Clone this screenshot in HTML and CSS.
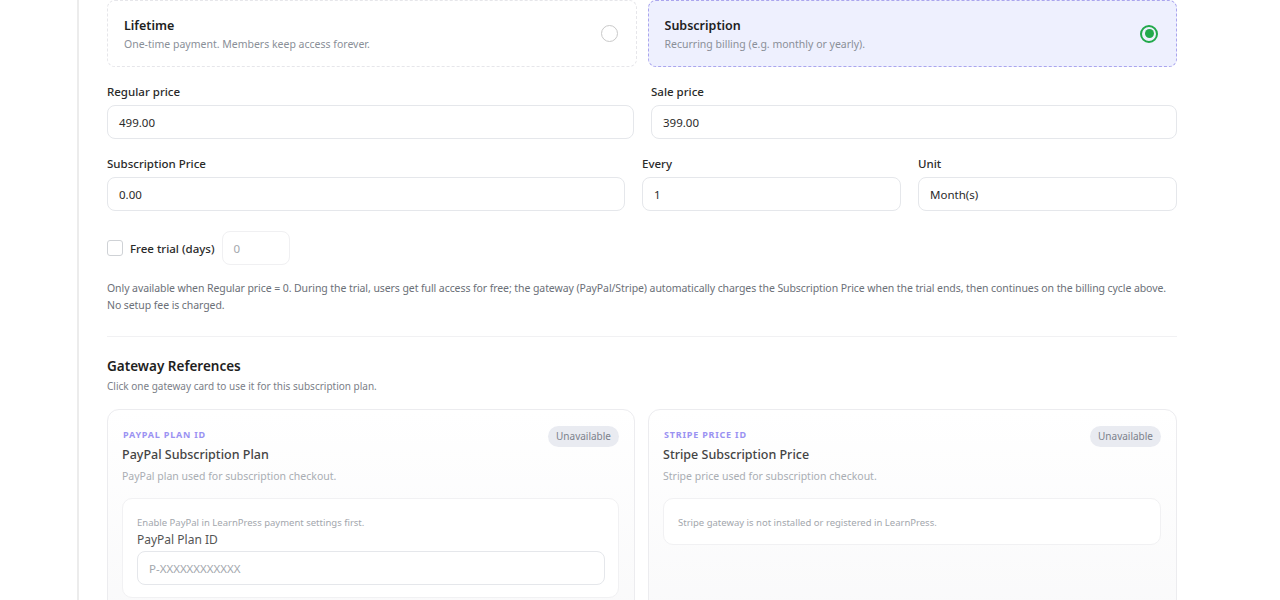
FILE: index.html
```html
<!DOCTYPE html>
<html lang="en">
<head>
    <meta charset="UTF-8">
    <meta name="viewport" content="width=device-width, initial-scale=1.0">
    <title>Subscription Plan</title>
    <link rel="stylesheet" href="styles.css">
</head>
<body>
    <div class="layout">
        <aside class="sidebar"></aside>
        <main class="content">
            <div class="plan-types">
                <label class="plan-card">
                    <div class="plan-text">
                        <div class="plan-title">Lifetime</div>
                        <div class="plan-desc">One-time payment. Members keep access forever.</div>
                    </div>
                    <span class="radio"></span>
                </label>
                <label class="plan-card selected">
                    <div class="plan-text">
                        <div class="plan-title">Subscription</div>
                        <div class="plan-desc">Recurring billing (e.g. monthly or yearly).</div>
                    </div>
                    <span class="radio checked"></span>
                </label>
            </div>

            <div class="row two">
                <div class="field">
                    <label class="field-label">Regular price</label>
                    <div class="input">499.00</div>
                </div>
                <div class="field">
                    <label class="field-label">Sale price</label>
                    <div class="input">399.00</div>
                </div>
            </div>

            <div class="row three">
                <div class="field">
                    <label class="field-label">Subscription Price</label>
                    <div class="input">0.00</div>
                </div>
                <div class="field">
                    <label class="field-label">Every</label>
                    <div class="input">1</div>
                </div>
                <div class="field">
                    <label class="field-label">Unit</label>
                    <div class="input">Month(s)</div>
                </div>
            </div>

            <div class="trial">
                <span class="checkbox"></span>
                <span class="trial-label">Free trial (days)</span>
                <div class="input small placeholder">0</div>
            </div>
            <p class="help">Only available when Regular price = 0. During the trial, users get full access for free; the gateway (PayPal/Stripe) automatically charges the Subscription Price when the trial ends, then continues on the billing cycle above. No setup fee is charged.</p>

            <hr class="divider">

            <h3 class="section-title">Gateway References</h3>
            <p class="section-sub">Click one gateway card to use it for this subscription plan.</p>

            <div class="gateways">
                <div class="gateway">
                    <span class="badge">Unavailable</span>
                    <div class="eyebrow">PayPal Plan ID</div>
                    <div class="gw-title">PayPal Subscription Plan</div>
                    <div class="gw-desc">PayPal plan used for subscription checkout.</div>
                    <div class="gw-box">
                        <div class="gw-note">Enable PayPal in LearnPress payment settings first.</div>
                        <div class="gw-label">PayPal Plan ID</div>
                        <div class="input placeholder">P-XXXXXXXXXXXX</div>
                    </div>
                </div>
                <div class="gateway">
                    <span class="badge">Unavailable</span>
                    <div class="eyebrow">Stripe Price ID</div>
                    <div class="gw-title">Stripe Subscription Price</div>
                    <div class="gw-desc">Stripe price used for subscription checkout.</div>
                    <div class="gw-box short">
                        <div class="gw-note">Stripe gateway is not installed or registered in LearnPress.</div>
                    </div>
                </div>
            </div>
        </main>
    </div>
</body>
</html>
```

FILE: styles.css
```css
body {
    margin: 0;
    padding: 0;
    background-color: #fff;
    color: #1f2328;
    font-family: "Noto Sans", "Open Sans", sans-serif;
    overflow: hidden;
}

.layout {
    display: flex;
    height: 600px;
}

.sidebar {
    width: 77px;
    border-right: 2px solid #ececec;
    flex-shrink: 0;
}

.content {
    width: 1070px;
    margin-left: 28px;
}

/* plan type cards */
.plan-types {
    display: grid;
    grid-template-columns: 1fr 1fr;
    gap: 11px;
}

.plan-card {
    display: flex;
    align-items: center;
    justify-content: space-between;
    height: 67px;
    box-sizing: border-box;
    padding: 0 17px 0 16px;
    border: 1px dashed #e6e6ea;
    border-radius: 8px;
    background-color: #fff;
}

.plan-card.selected {
    background-color: #eef0fe;
    border-color: #aaa5ee;
}

.plan-title {
    font-size: 12.5px;
    font-weight: 600;
    line-height: 18px;
    margin-top: 1px;
    color: #1e1e1e;
}

.plan-desc {
    font-size: 10.5px;
    line-height: 16px;
    margin-top: 1px;
    color: #8a8f98;
}

.radio {
    width: 15px;
    height: 15px;
    border: 1.5px solid #c9c9c9;
    border-radius: 50%;
    margin-right: 1px;
    position: relative;
}

.radio.checked {
    border: 2px solid #22a94b;
    width: 14px;
    height: 14px;
}

.radio.checked::after {
    content: "";
    position: absolute;
    left: 2.5px;
    top: 2.5px;
    width: 9px;
    height: 9px;
    border-radius: 50%;
    background-color: #22a94b;
}

/* fields */
.row {
    display: grid;
    gap: 17px;
    margin-top: 17px;
}

.row.two {
    grid-template-columns: 527px 1fr;
}

.row.three {
    grid-template-columns: 2fr 1fr 1fr;
}

.field-label {
    display: block;
    font-size: 11.5px;
    font-weight: 500;
    line-height: 16px;
    margin-bottom: 5px;
    color: #2a2a2a;
}

.input {
    height: 34px;
    box-sizing: border-box;
    border: 1px solid #e5e7eb;
    border-radius: 8px;
    padding: 0 11px;
    display: flex;
    align-items: center;
    font-size: 11.5px;
    color: #2a2a2a;
    background-color: #fff;
}

.input.placeholder {
    color: #a3a7ad;
}

/* trial */
.trial {
    display: flex;
    align-items: center;
    margin-top: 20px;
}

.checkbox {
    width: 14px;
    height: 14px;
    border: 1px solid #cfd2d6;
    border-radius: 3px;
    margin-right: 7px;
}

.trial-label {
    font-size: 11.5px;
    font-weight: 500;
    color: #2a2a2a;
    margin-right: 7px;
}

.input.small {
    width: 68px;
    border-color: #f0f0f2;
}

.help {
    font-size: 10.5px;
    line-height: 17px;
    letter-spacing: -0.08px;
    color: #6b7078;
    margin: 15px 0 0;
}

.divider {
    border: none;
    border-top: 1px solid #f1f1f3;
    margin: 22px 0 0;
}

.section-title {
    font-size: 13.5px;
    font-weight: 600;
    line-height: 20px;
    margin: 19px 0 0;
    color: #1e1e1e;
}

.section-sub {
    font-size: 10px;
    line-height: 15px;
    margin: 3px 0 0;
    color: #7b8088;
}

/* gateway cards */
.gateways {
    display: grid;
    grid-template-columns: 528px 1fr;
    gap: 13px;
    margin-top: 15px;
}

.gateway {
    position: relative;
    height: 200px;
    border: 1px solid #ececef;
    border-radius: 12px;
    padding: 19px 15px 0 14px;
    background: linear-gradient(#fff, #f9f9fa);
}

.badge {
    position: absolute;
    top: 16px;
    right: 15px;
    height: 21px;
    padding: 0 8px;
    border-radius: 11px;
    background-color: #e9ebf1;
    color: #7c818c;
    font-size: 10px;
    line-height: 21px;
}

.eyebrow {
    font-size: 9px;
    font-weight: 700;
    letter-spacing: 0.8px;
    text-transform: uppercase;
    line-height: 12px;
    margin-left: 1px;
    color: #9a92f2;
}

.gw-title {
    font-size: 12.5px;
    font-weight: 500;
    line-height: 18px;
    margin-top: 5px;
    color: #444;
}

.gw-desc {
    font-size: 10.5px;
    line-height: 16px;
    margin-top: 4px;
    color: #a9adb3;
}

.gw-box {
    margin-top: 14px;
    border: 1px solid #f1f1f3;
    border-radius: 10px;
    background-color: #fff;
    padding: 17px 13px 12px 14px;
}

.gw-box.short {
    padding-bottom: 14px;
}

.gw-note {
    font-size: 9.5px;
    line-height: 14px;
    color: #a3a7ad;
}

.gw-label {
    font-size: 12px;
    line-height: 17px;
    color: #555;
    margin: 1px 0 3px;
}
```
